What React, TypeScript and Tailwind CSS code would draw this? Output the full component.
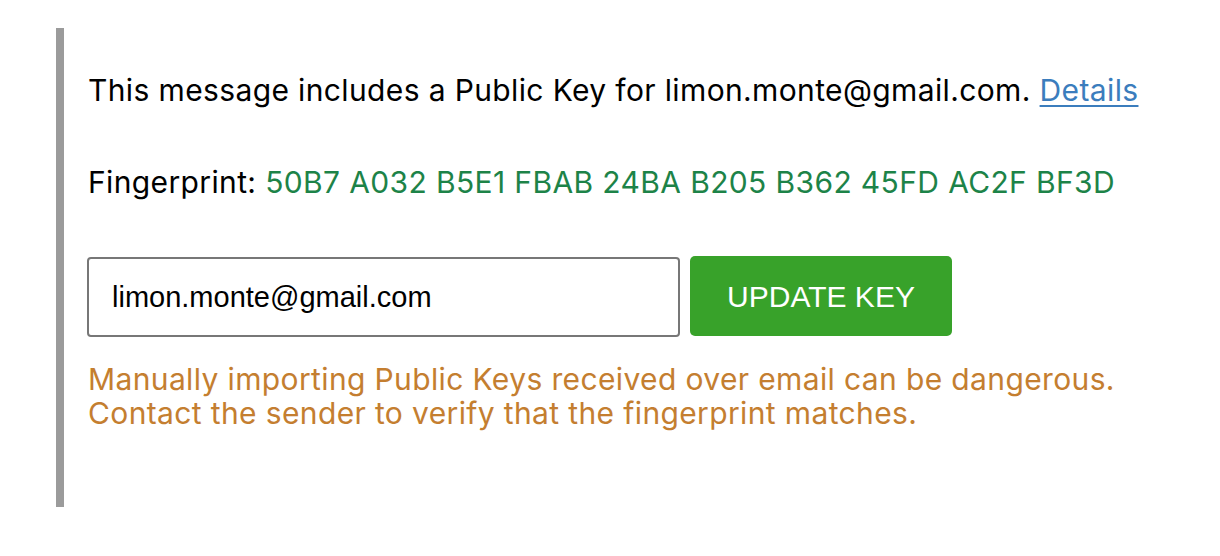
import React from "react";

export default function App() {
  return (
    <div className="w-[1220px] h-[556px] bg-white pt-[28px] pl-[56px]">
      <div className="border-l-[8px] border-[#9b9b9b] pl-[24px] pt-[44px] pb-[77px] font-['Inter','Noto_Sans',sans-serif] text-[30px] tracking-[0.37px] text-black">
        <p className="leading-[36px] whitespace-nowrap">
          This message includes a Public Key for limon.monte@gmail.com.{" "}
          <a href="#" className="text-[#3b7dbd] underline underline-offset-[4px] decoration-[2px]">Details</a>
        </p>
        <p className="mt-[56px] leading-[36px] whitespace-nowrap">
          Fingerprint: <span className="text-[#1d8348]">50B7 A032 B5E1 FBAB 24BA B205 B362 45FD AC2F BF3D</span>
        </p>
        <div className="mt-[56px] flex items-start gap-[10px] tracking-normal">
          <input
            readOnly
            value="limon.monte@gmail.com"
            className="-ml-[1px] mt-[1px] w-[593px] h-[80px] border-2 border-[#777777] rounded-[4px] px-[23px] font-['Liberation_Sans',Arial,sans-serif] text-[29px] text-black outline-none"
          />
          <button className="w-[262px] h-[80px] rounded-[5px] bg-[#38a22a] text-white font-['Liberation_Sans',Arial,sans-serif] text-[30px]">
            UPDATE KEY
          </button>
        </div>
        <p className="mt-[25px] leading-[34px] text-[#c47e30] whitespace-nowrap">
          Manually importing Public Keys received over email can be dangerous.
          <br />
          Contact the sender to verify that the fingerprint matches.
        </p>
      </div>
    </div>
  );
}
